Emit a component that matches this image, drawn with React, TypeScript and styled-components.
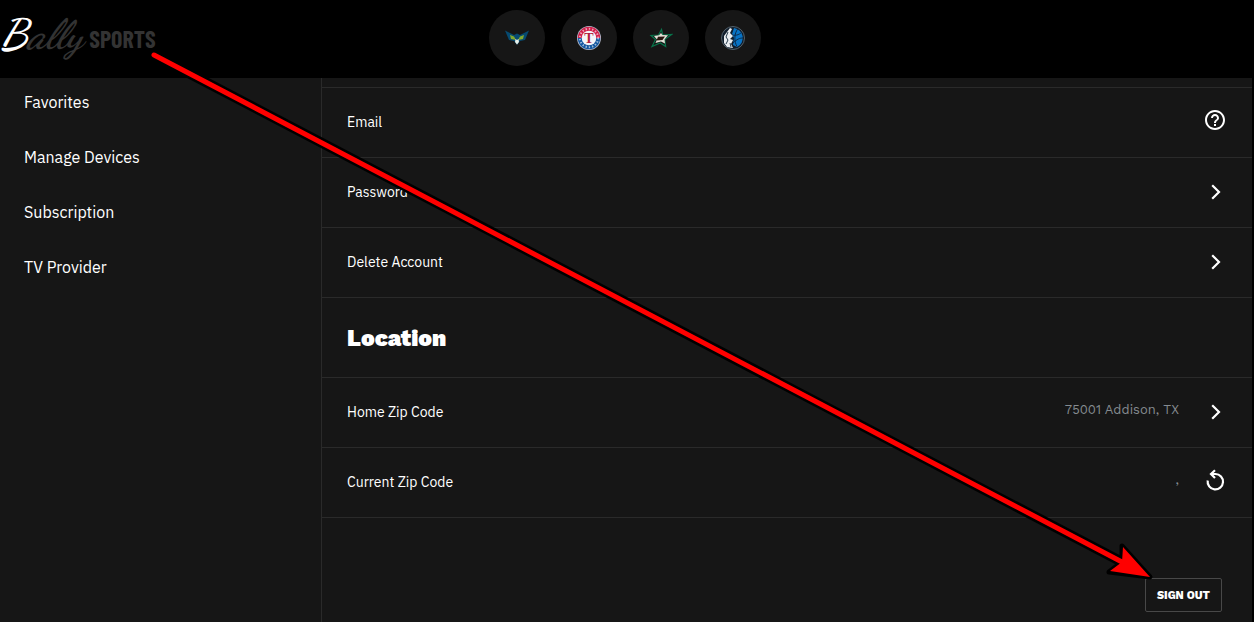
import React from "react";
import styled, { createGlobalStyle } from "styled-components";

const GlobalStyle = createGlobalStyle`
  * { box-sizing: border-box; }
  html, body { margin: 0; background: #000; }
  body { font-family: "IBM Plex Sans", "Open Sans", "Liberation Sans", sans-serif; color: #fff; overflow-x: hidden; }
`;

const Page = styled.div`
  position: relative;
  min-height: 100vh;
  display: flex;
  flex-direction: column;
`;

const Header = styled.header`
  display: grid;
  grid-template-columns: 1fr auto 1fr;
  align-items: center;
  height: 78px;
  padding: 0 4px 2px 0;
  background: #000;
`;

const Brand = styled.a`
  display: flex;
  align-items: center;
  gap: 6px;
  color: #333;
  text-decoration: none;
`;

const Script = styled.span`
  padding-bottom: 6px;
  font: italic bold 42px/48px "Dancing Script", "Liberation Serif", serif;
`;

const Initial = styled.span`
  color: #fff;
`;

const Wordmark = styled.span`
  padding-top: 2px;
  font: bold 24px/32px "Barlow Condensed", "Roboto Condensed", "Roboto", sans-serif;
`;

const Teams = styled.nav`
  display: flex;
  gap: 16px;
`;

const Team = styled.a`
  display: grid;
  place-items: center;
  width: 56px;
  height: 56px;
  border-radius: 50%;
  background: #161616;
`;

const Body = styled.div`
  display: flex;
  flex: 1;
  margin-right: 2px;
  background: #161616;
`;

const Sidebar = styled.nav`
  display: flex;
  flex-direction: column;
  gap: 31px;
  flex: 0 0 322px;
  padding: 12px 24px;
  border-right: 1px solid #2a2a2a;
`;

const SideLink = styled.a`
  color: #fff;
  font-size: 16px;
  line-height: 24px;
  text-decoration: none;
`;

const Main = styled.main`
  flex: 1;
  padding-top: 9px;
`;

const Row = styled.section`
  display: flex;
  align-items: center;
  justify-content: space-between;
  height: 70px;
  padding: 0 25px;
  border-top: 1px solid #2a2a2a;
`;

const HeadingRow = styled(Row)`
  height: 80px;
`;

const Label = styled.span`
  padding-bottom: 1px;
  font-size: 14px;
  line-height: 20px;
`;

const Heading = styled.h2`
  margin: 0;
  padding-top: 2px;
  font: 900 23px/32px "Work Sans", "Noto Sans", sans-serif;
`;

const Action = styled.div`
  display: flex;
  align-items: center;
  gap: 24px;
  padding-bottom: 4px;
`;

const Value = styled.span`
  padding-bottom: 2px;
  color: #858b90;
  font: 13px/20px "Work Sans", "Noto Sans", sans-serif;
`;

const IconButton = styled.button`
  display: grid;
  place-items: center;
  padding: 0;
  border: 0;
  background: none;
  color: #fff;
`;

const Footer = styled.footer`
  display: flex;
  justify-content: flex-end;
  padding: 60px 30px 10px;
  border-top: 1px solid #2a2a2a;
`;

const SignOut = styled.button`
  height: 34px;
  padding: 1px 11px 0;
  border: 1px solid #484848;
  border-radius: 2px;
  background: #161616;
  color: #fff;
  font: 800 11px/16px "Work Sans", "Noto Sans", sans-serif;
`;

const Pointer = styled.svg`
  position: absolute;
  top: 0;
  left: 0;
  pointer-events: none;
`;

const Chevron = () => (
  <svg width="24" height="24" viewBox="0 0 24 24" fill="none" stroke="currentColor" strokeWidth="2.2" aria-hidden="true">
    <path d="M9.2 6.200 16 13l-6.800 6.800" />
  </svg>
);

const Help = () => (
  <svg width="24" height="24" viewBox="0 1 24 24" fill="currentColor" aria-hidden="true">
    <path d="M11 18h2v-2h-2v2zm1-16C6.48 2 2 6.48 2 12s4.48 10 10 10 10-4.480 10-10S17.520 2 12 2zm0 18c-4.410 0-8-3.590-8-8s3.590-8 8-8 8 3.590 8 8-3.590 8-8 8zm0-14c-2.210 0-4 1.790-4 4h2c0-1.100.9-2 2-2s2 .9 2 2c0 2-3 1.750-3 5h2c0-2.250 3-2.500 3-5 0-2.210-1.790-4-4-4z" />
  </svg>
);

const Reload = () => (
  <svg width="24" height="24" viewBox="0 0 24 24" fill="none" stroke="currentColor" strokeWidth="2.2" aria-hidden="true">
    <path d="M4.700 11.500A7.700 7.700 0 1 0 12.500 5H8.500M12 1.300l-4 3.700 4 4" />
  </svg>
);

const Wings = () => (
  <svg width="24" height="24" viewBox="0 0 24 24" aria-hidden="true">
    <path d="M0 4.500 9 9l3-1.500L15 9l9-4.500-4 9.500-5 1-3 4-3-4-5-1z" fill="#064a70" />
    <path d="m5 9 4 1.500 2 3.500-5-1zm14 0-4 1.500-2 3.500 5-1z" fill="#84a82d" />
    <path d="m10.500 13 1.500 1 1.500-1 .5 3-2 2.500L10 16z" fill="#e8f0e8" />
  </svg>
);

const Rangers = () => (
  <svg width="24" height="24" viewBox="0 0 24 24" aria-hidden="true">
    <circle cx="12" cy="12" r="12" fill="#b8bed0" />
    <path d="M.8 12a11.200 11.200 0 0 1 22.400 0z" fill="#d11f4a" />
    <path d="M.8 12a11.200 11.200 0 0 0 22.400 0z" fill="#1457a0" />
    <circle cx="12" cy="12" r="9.200" fill="none" stroke="#fff" strokeWidth="2" strokeDasharray="1.400 1.900" opacity=".6" />
    <circle cx="12" cy="12" r="7.300" fill="#f4f4f8" />
    <text x="12" y="17" textAnchor="middle" fontFamily="Liberation Serif, serif" fontWeight="bold" fontSize="14" fill="#b41f3f">T</text>
  </svg>
);

const Stars = () => (
  <svg width="24" height="24" viewBox="0 0 24 24" aria-hidden="true">
    <path d="m12.500 3.500 1.200 5.500 8.800-.5-6.800 5 1 7-5.500-3.500-8.200 3.500 3.500-7L2 9.500 9.500 9z" fill="#161616" stroke="#08734a" strokeWidth="1.200" />
    <path d="m12 7 1.500 2 5.500.2-3.500 4.300.5 4-4-2-5.500 1.500 1.500-3.500-3-3.500 5-.8z" fill="#e2e0d6" />
    <path d="m9 10.700 7-.3-2.500 3.700-6 .4z" fill="#28160f" />
  </svg>
);

const Mavericks = () => (
  <svg width="24" height="24" viewBox="0 0 24 24" aria-hidden="true">
    <circle cx="12" cy="12" r="11.500" fill="#101d2b" stroke="#53616b" />
    <path d="M13 2a10 10 0 0 1 3 19l-4-2 1-7-2-4z" fill="#0873c4" />
    <path d="M17 2.500c-4 5-4 13-1 18M11 9c5 1 8-1 10-3M12 17c4-4 7-5 10-5" fill="none" stroke="#0d2b4a" />
    <path d="M9 2 6 6l-3 4v7l3 4 6 1-2-4 2-4-3-1 3-3-3-3 2-4z" fill="#e9edf0" />
    <path d="m7 6-2 5 2 3-2 4M9 17l1 4" fill="none" stroke="#263b4a" />
  </svg>
);

const teams = [
  { name: "Dallas Wings", Logo: Wings },
  { name: "Texas Rangers", Logo: Rangers },
  { name: "Dallas Stars", Logo: Stars },
  { name: "Dallas Mavericks", Logo: Mavericks },
];

const links = ["Favorites", "Manage Devices", "Subscription", "TV Provider"];

type SettingProps = { label: string; value?: string; action: string; icon: React.ReactNode };

const Setting = ({ label, value, action, icon }: SettingProps) => (
  <Row>
    <Label>{label}</Label>
    <Action>
      {value && <Value>{value}</Value>}
      <IconButton type="button" aria-label={action}>{icon}</IconButton>
    </Action>
  </Row>
);

export default function App() {
  return (
    <Page>
      <GlobalStyle />
      <Header>
        <Brand href="#home">
          <Script><Initial>B</Initial>ally</Script>
          <Wordmark>SPORTS</Wordmark>
        </Brand>
        <Teams aria-label="Teams">
          {teams.map(({ name, Logo }) => (
            <Team key={name} href="#team" aria-label={name}><Logo /></Team>
          ))}
        </Teams>
      </Header>
      <Body>
        <Sidebar aria-label="Account">
          {links.map((text) => <SideLink key={text} href="#section">{text}</SideLink>)}
        </Sidebar>
        <Main>
          <Setting label="Email" action="Email help" icon={<Help />} />
          <Setting label="Password" action="Change password" icon={<Chevron />} />
          <Setting label="Delete Account" action="Delete account" icon={<Chevron />} />
          <HeadingRow><Heading>Location</Heading></HeadingRow>
          <Setting label="Home Zip Code" value="75001 Addison, TX" action="Change home zip code" icon={<Chevron />} />
          <Setting label="Current Zip Code" value="," action="Refresh current zip code" icon={<Reload />} />
          <Footer><SignOut type="button">SIGN OUT</SignOut></Footer>
        </Main>
      </Body>
      <Pointer width="1254" height="622" viewBox="0 0 1254 622" aria-hidden="true">
        <g strokeLinejoin="round" strokeLinecap="round">
          <path d="M154 55 1122 562" stroke="#000" strokeWidth="10" />
          <path d="m1122 546 28 31-41-5 13-10z" fill="#000" stroke="#000" strokeWidth="5" />
          <path d="M154 55 1122 562" stroke="#f00" strokeWidth="5" />
          <path d="m1123 547 27 30-40-6 12-9z" fill="#f00" />
        </g>
      </Pointer>
    </Page>
  );
}
